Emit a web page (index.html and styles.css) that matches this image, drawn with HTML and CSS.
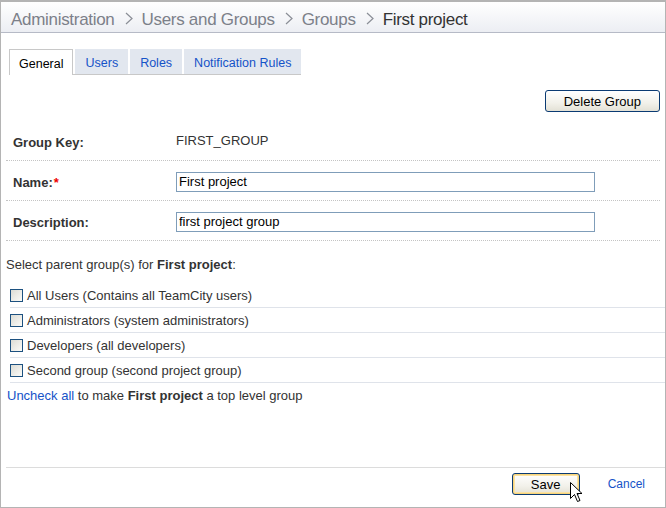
FILE: index.html
```html
<!DOCTYPE html>
<html>
<head>
<meta charset="utf-8">
<link rel="stylesheet" href="styles.css">
</head>
<body>
<div class="frame">
  <div class="header">
    <span class="crumb">Administration</span><svg class="sep" width="8" height="13" viewBox="0 0 8 13"><path d="M1 1 L7 6.5 L1 12" fill="none" stroke="#8a8e96" stroke-width="1.2"/></svg><span class="crumb">Users and Groups</span><svg class="sep" width="8" height="13" viewBox="0 0 8 13"><path d="M1 1 L7 6.5 L1 12" fill="none" stroke="#8a8e96" stroke-width="1.2"/></svg><span class="crumb">Groups</span><svg class="sep" width="8" height="13" viewBox="0 0 8 13"><path d="M1 1 L7 6.5 L1 12" fill="none" stroke="#8a8e96" stroke-width="1.2"/></svg><span class="current">First project</span>
  </div>
  <div class="tabs">
    <span class="tab active">General</span>
    <span class="tab">Users</span>
    <span class="tab">Roles</span>
    <span class="tab">Notification Rules</span>
  </div>
  <div class="actions">
    <button class="btn">Delete Group</button>
  </div>
  <div class="form">
    <div class="row">
      <div class="label">Group Key:</div>
      <div class="value">FIRST_GROUP</div>
    </div>
    <div class="row">
      <div class="label">Name:<span class="req">*</span></div>
      <div class="value"><input class="field" type="text" value="First project"></div>
    </div>
    <div class="row">
      <div class="label">Description:</div>
      <div class="value"><input class="field" type="text" value="first project group"></div>
    </div>
  </div>
  <div class="intro">Select parent group(s) for <b>First project</b>:</div>
  <div class="groups">
    <label class="grp"><span class="box"></span>All Users (Contains all TeamCity users)</label>
    <label class="grp"><span class="box"></span>Administrators (system administrators)</label>
    <label class="grp"><span class="box"></span>Developers (all developers)</label>
    <label class="grp"><span class="box"></span>Second group (second project group)</label>
  </div>
  <div class="uncheck"><a class="link">Uncheck all</a> to make <b>First project</b> a top level group</div>
  <div class="footer">
    <div class="save-wrap">
      <button class="btn save">Save</button>
      <svg class="cursor" width="13" height="21" viewBox="0 0 13 21"><path d="M0.5 0.5 L0.5 16.5 L4.5 12.5 L7.5 19.5 L10 18.5 L7 11.5 L12 11.5 Z" fill="#fff" stroke="#000" stroke-width="1"/></svg>
    </div>
    <a class="link cancel">Cancel</a>
  </div>
</div>
</body>
</html>
```

FILE: styles.css
```css
html, body {
  margin: 0;
  padding: 0;
  background: #fff;
}
body {
  font-family: "Liberation Sans", Arial, sans-serif;
  font-size: 13px;
  color: #333;
}
.frame {
  width: 666px;
  height: 508px;
  box-sizing: border-box;
  border: 1px solid #b4b4b4;
  border-top: 2px solid #b4b4b4;
  position: relative;
}
.header {
  height: 31px;
  box-sizing: border-box;
  border-bottom: 1px solid #b6bac6;
  background: linear-gradient(#ffffff, #eceef3);
  display: flex;
  align-items: center;
  padding: 5px 0 0 10px;
  font-size: 17px;
  letter-spacing: -0.3px;
  color: #7c8089;
  white-space: nowrap;
}
.sep {
  margin: 0 9px 0 10px;
  position: relative;
  top: -1px;
}
.current {
  color: #333;
}
.tabs {
  margin: 16px 0 0 8px;
  display: inline-flex;
  gap: 2px;
  border-bottom: 1px solid #c8c8c8;
  white-space: nowrap;
}
.tab {
  height: 25px;
  box-sizing: border-box;
  padding: 6px 10px 0;
  line-height: 16px;
  background: #e2e7ef;
  color: #1553c8;
  font-size: 12.5px;
}
.tab.active {
  background: #fff;
  color: #000;
  border: 1px solid #c8c8c8;
  border-bottom: none;
  margin-bottom: -1px;
  height: 26px;
  padding: 6px 9px 0;
}
.actions {
  display: flex;
  justify-content: flex-end;
  padding: 15px 5px 0 0;
}
.btn {
  font-family: "Liberation Sans", Arial, sans-serif;
  font-size: 13px;
  color: #000;
  height: 22px;
  border: 1px solid #0b3b73;
  border-radius: 3px;
  background: linear-gradient(#ffffff, #f2f1ea 60%, #e3e1d6);
  padding: 0 18px;
}
.form {
  margin: 9px 5px 0 5px;
}
.row {
  display: flex;
  align-items: center;
  height: 39px;
  border-bottom: 1px dotted #c4c4c4;
}
.label {
  width: 163px;
  padding-left: 7px;
  font-weight: bold;
  color: #333;
  position: relative;
  top: 2px;
}
.req {
  color: #e00;
  margin-left: 1px;
}
.value {
  color: #333;
}
.field {
  width: 419px;
  height: 20px;
  box-sizing: border-box;
  border: 1px solid #7f9db9;
  padding: 0 2px;
  font-family: "Liberation Sans", Arial, sans-serif;
  font-size: 13px;
  color: #000;
  margin: 0;
  position: relative;
  top: 1px;
}
.intro {
  margin: 16px 0 0 5px;
  color: #333;
}
.groups {
  margin: 11px 0 0 9px;
}
.grp {
  display: flex;
  align-items: center;
  height: 24px;
  border-bottom: 1px solid #dfe3ea;
  color: #333;
}
.box {
  width: 11px;
  height: 11px;
  border: 1px solid #1c5180;
  background: linear-gradient(135deg, #dcdcd5, #fbfbf8);
  margin: 0 4px 0 0;
}
.uncheck {
  margin: 5px 0 0 6px;
  color: #333;
}
.link {
  color: #1553c8;
}
.footer {
  position: absolute;
  left: 5px;
  right: 0;
  top: 465px;
  border-top: 1px solid #dcdcdc;
  display: flex;
  justify-content: flex-end;
  align-items: center;
  padding-top: 5px;
}
.save-wrap {
  position: relative;
}
.btn.save {
  width: 68px;
  box-shadow: inset 0 0 0 1px #f8d47a, inset 0 0 0 2px #fbe3a4;
  padding: 0;
}
.cursor {
  position: absolute;
  left: 58px;
  top: 9px;
}
.cancel {
  font-size: 12px;
  margin: 0 20px 0 28px;
}
```
